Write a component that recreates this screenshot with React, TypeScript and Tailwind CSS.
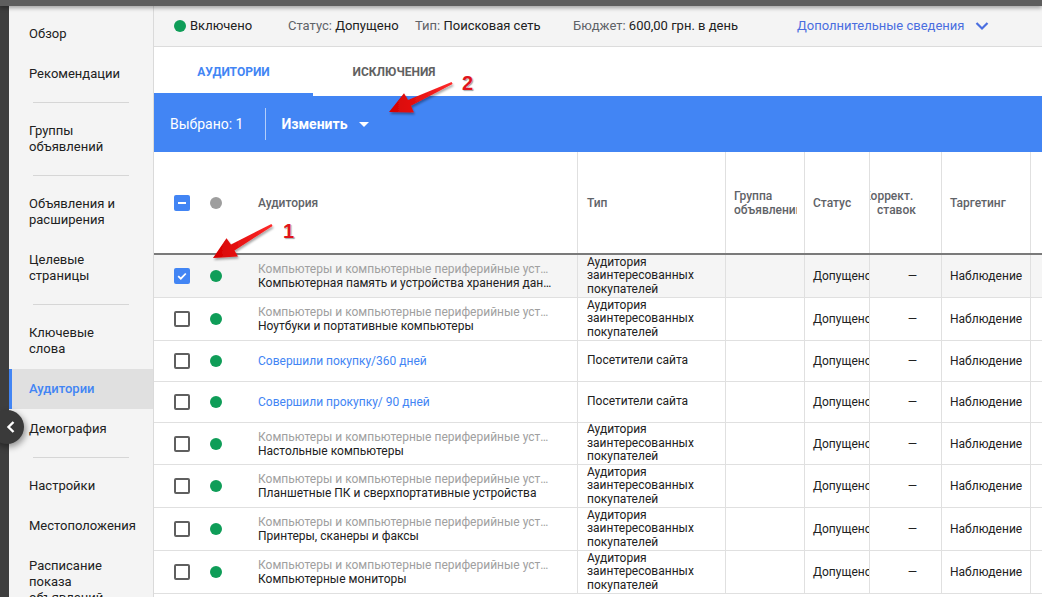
import React from 'react';

type Row = {
  sel?: boolean;
  parent?: string;
  name: string;
  link?: boolean;
  type: string[];
  h: string;
};

const PARENT = 'Компьютеры и компьютерные периферийные устройства';
const BUYERS = ['Аудитория', 'заинтересованных', 'покупателей'];

const rows: Row[] = [
  { sel: true, parent: PARENT, name: 'Компьютерная память и устройства хранения данных', type: BUYERS, h: 'h-[43px]' },
  { parent: PARENT, name: 'Ноутбуки и портативные компьютеры', type: BUYERS, h: 'h-[43px]' },
  { link: true, name: 'Совершили покупку/360 дней', type: ['Посетители сайта'], h: 'h-[41px]' },
  { link: true, name: 'Совершили прокупку/ 90 дней', type: ['Посетители сайта'], h: 'h-[41px]' },
  { parent: PARENT, name: 'Настольные компьютеры', type: BUYERS, h: 'h-[42px]' },
  { parent: PARENT, name: 'Планшетные ПК и сверхпортативные устройства', type: BUYERS, h: 'h-[43px]' },
  { parent: PARENT, name: 'Принтеры, сканеры и факсы', type: BUYERS, h: 'h-[43px]' },
  { parent: PARENT, name: 'Компьютерные мониторы', type: BUYERS, h: 'h-[43px]' },
];

function NavItem({ lines, active }: { lines: string[]; active?: boolean }) {
  return (
    <div
      className={
        active
          ? 'py-3 pl-[17px] border-l-[3px] border-[#4285f4] bg-[#e0e0e0] text-[#4285f4] font-medium'
          : 'py-3 pl-5 text-[#212121]'
      }
    >
      {lines.map((l) => (
        <div key={l} className="leading-4 text-[13px]">
          {l}
        </div>
      ))}
    </div>
  );
}

function NavDivider() {
  return <div className="mx-6 my-2 h-px bg-[#d6d6d6]" />;
}

function Checkbox({ checked }: { checked?: boolean }) {
  if (checked) {
    return (
      <div className="w-4 h-4 rounded-[2px] bg-[#4285f4] flex items-center justify-center">
        <svg width="12" height="12" viewBox="0 0 12 12">
          <path d="M2.2 6.2 L4.8 8.7 L9.8 3.5" stroke="#fff" strokeWidth="1.8" fill="none" />
        </svg>
      </div>
    );
  }
  return <div className="w-4 h-4 rounded-[2px] border-2 border-[#5f5f5f] bg-white" />;
}

export default function App() {
  return (
    <div className="relative w-[1042px] h-[597px] overflow-hidden bg-white [font-family:Roboto,Arial,sans-serif]">
      {/* верхняя тёмная полоса */}
      <div className="h-[6px] bg-[#5e5e5e] shadow-[0_2px_4px_rgba(0,0,0,0.35)] relative z-10" />

      <div className="flex h-[591px]">
        {/* тёмная полоса слева */}
        <div className="w-[9px] bg-[#3e3e3e]" />

        {/* боковое меню */}
        <div className="w-[145px] shrink-0 bg-[#f4f4f4] border-r border-[#dadada] pt-[8px]">
          <NavItem lines={['Обзор']} />
          <NavItem lines={['Рекомендации']} />
          <NavDivider />
          <NavItem lines={['Группы', 'объявлений']} />
          <NavDivider />
          <NavItem lines={['Объявления и', 'расширения']} />
          <NavItem lines={['Целевые', 'страницы']} />
          <NavDivider />
          <NavItem lines={['Ключевые', 'слова']} />
          <NavItem lines={['Аудитории']} active />
          <NavItem lines={['Демография']} />
          <NavDivider />
          <NavItem lines={['Настройки']} />
          <NavItem lines={['Местоположения']} />
          <NavItem lines={['Расписание', 'показа', 'объявлений']} />
        </div>

        {/* основная часть */}
        <div className="flex-1 min-w-0 flex flex-col">
          {/* строка состояния */}
          <div className="h-[41px] shrink-0 bg-[#f4f4f4] border-b border-[#dcdcdc] flex items-center pl-5 text-[13px] text-[#212121]">
            <div className="w-[114px] flex items-center gap-1">
              <span className="w-3 h-3 rounded-full bg-[#0f9d58]" />
              <span>Включено</span>
            </div>
            <div className="w-[127px]">
              <span className="text-[#5f6368]">Статус: </span>Допущено
            </div>
            <div className="w-[158px]">
              <span className="text-[#5f6368]">Тип: </span>Поисковая сеть
            </div>
            <div className="w-[224px]">
              <span className="text-[#5f6368]">Бюджет: </span>600,00 грн. в день
            </div>
            <div className="flex items-center gap-[11px] text-[#4a6ee0]">
              <span>Дополнительные сведения</span>
              <svg width="14" height="10" viewBox="0 0 14 10">
                <path d="M1.5 2 L7 7.5 L12.5 2" stroke="#4a6ee0" strokeWidth="2.2" fill="none" />
              </svg>
            </div>
          </div>

          {/* вкладки */}
          <div className="h-[49px] shrink-0 flex text-[12px] font-bold">
            <div className="w-[159px] flex items-center justify-center text-[#4285f4] border-b-[3px] border-[#4285f4] pt-[3px]">
              АУДИТОРИИ
            </div>
            <div className="w-[162px] flex items-center justify-center text-[#616161] pt-0">ИСКЛЮЧЕНИЯ</div>
          </div>

          {/* синяя панель выбора */}
          <div className="h-[56px] shrink-0 bg-[#4285f4] flex items-center pl-4 text-white text-[14px]">
            <span>Выбрано: 1</span>
            <div className="ml-[21px] w-px h-8 bg-white/60" />
            <span className="ml-[16px] font-bold">Изменить</span>
            <span className="ml-[11px] w-0 h-0 border-x-[5px] border-x-transparent border-t-[5px] border-t-white" />
          </div>

          {/* таблица */}
          <div className="flex-1 overflow-hidden text-[12px] text-[#212121]">
            <div className="w-[1000px]">
              {/* шапка */}
              <div className="flex h-[103px] border-b-2 border-[#7a7a7a] text-[#5f6368] font-medium">
                <div className="w-[424px] flex items-center border-r border-[#e0e0e0]">
                  <div className="ml-5 w-4 h-4 rounded-[2px] bg-[#4285f4] flex items-center justify-center">
                    <span className="w-2 h-[2px] bg-white" />
                  </div>
                  <span className="ml-5 w-3 h-3 rounded-full bg-[#9e9e9e]" />
                  <span className="ml-9">Аудитория</span>
                </div>
                <div className="w-[148px] flex items-center pl-[9px] border-r border-[#e0e0e0]">Тип</div>
                <div className="w-[79px] flex items-center pl-[8px] pr-[7px] border-r border-[#e0e0e0]">
                  <div className="overflow-hidden whitespace-nowrap leading-[14px]">
                    <div>Группа</div>
                    <div>объявлений</div>
                  </div>
                </div>
                <div className="w-[65px] flex items-center pl-[8px] border-r border-[#e0e0e0]">Статус</div>
                <div className="w-[72px] flex items-center pl-[7px] overflow-hidden whitespace-nowrap border-r border-[#e0e0e0] leading-[14px]">
                  <div>
                    <div className="-ml-[14px]">Коррект.</div>
                    <div>ставок</div>
                  </div>
                </div>
                <div className="w-[89px] flex items-center pl-[8px] border-r border-[#e0e0e0]">Таргетинг</div>
                <div className="flex-1" />
              </div>

              {/* строки */}
              {rows.map((r) => (
                <div
                  key={r.name}
                  className={`flex ${r.h} border-b border-[#e0e0e0] ${r.sel ? 'bg-[#f5f5f5]' : 'bg-white'}`}
                >
                  <div className="w-[424px] flex items-center border-r border-[#e0e0e0]">
                    <div className="ml-5">
                      <Checkbox checked={r.sel} />
                    </div>
                    <span className="ml-5 w-3 h-3 shrink-0 rounded-full bg-[#0f9d58]" />
                    <div className="ml-9 w-[296px] leading-[14px] whitespace-nowrap">
                      {r.parent && <div className="truncate text-[#a0a0a0]">{r.parent}</div>}
                      <div className={r.link ? 'text-[#4285f4] truncate' : 'truncate'}>{r.name}</div>
                    </div>
                  </div>
                  <div className="w-[148px] flex flex-col justify-center pl-[9px] leading-[13.5px] border-r border-[#e0e0e0]">
                    {r.type.map((t) => (
                      <div key={t}>{t}</div>
                    ))}
                  </div>
                  <div className="w-[79px] border-r border-[#e0e0e0]" />
                  <div className="w-[65px] flex items-center pl-[8px] overflow-hidden whitespace-nowrap border-r border-[#e0e0e0]">
                    Допущено
                  </div>
                  <div className="w-[72px] flex items-center justify-end pr-[24px] border-r border-[#e0e0e0]">—</div>
                  <div className="w-[89px] flex items-center pl-[8px] border-r border-[#e0e0e0]">Наблюдение</div>
                  <div className="flex-1" />
                </div>
              ))}
            </div>
          </div>
        </div>
      </div>

      {/* кнопка сворачивания меню */}
      <div className="absolute left-[-10px] top-[410px] w-[34px] h-[34px] rounded-full bg-[#3a3a3a] shadow-[2px_3px_6px_rgba(0,0,0,0.4)] flex items-center justify-end pr-[8px]">
        <svg width="10" height="14" viewBox="0 0 10 14">
          <path d="M7.5 2 L2.5 7 L7.5 12" stroke="#fff" strokeWidth="2.4" fill="none" />
        </svg>
      </div>

      {/* красные стрелки-пометки */}
      <svg className="absolute inset-0 pointer-events-none" width="1042" height="597">
        <defs>
          <linearGradient id="ar" x1="0" y1="0" x2="1" y2="0">
            <stop offset="0" stopColor="#d40000" />
            <stop offset="1" stopColor="#ff2a2a" />
          </linearGradient>
          <filter id="sh" x="-20%" y="-20%" width="140%" height="140%">
            <feDropShadow dx="1" dy="2" stdDeviation="1.2" floodColor="#000" floodOpacity="0.35" />
          </filter>
        </defs>
        <polygon
          filter="url(#sh)"
          fill="url(#ar)"
          points="452.6,84 411,105.8 414,112.5 389,112 404,93.2 408,100 451.6,82"
        />
        <polygon
          filter="url(#sh)"
          fill="url(#ar)"
          points="272.6,226 234.5,250.5 238,256.5 213,258 226.5,238.2 231,244.4 271.4,224"
        />
      </svg>
      <div className="absolute left-[462px] top-[73px] text-[20px] font-bold text-[#e0141b] leading-none [text-shadow:0_0_2px_#fff,1px_1px_1px_rgba(0,0,0,0.45)] [font-family:Arial,sans-serif]">
        2
      </div>
      <div className="absolute left-[283px] top-[221px] text-[20px] font-bold text-[#e0141b] leading-none [text-shadow:0_0_2px_#fff,1px_1px_1px_rgba(0,0,0,0.45)] [font-family:Arial,sans-serif]">
        1
      </div>
    </div>
  );
}
